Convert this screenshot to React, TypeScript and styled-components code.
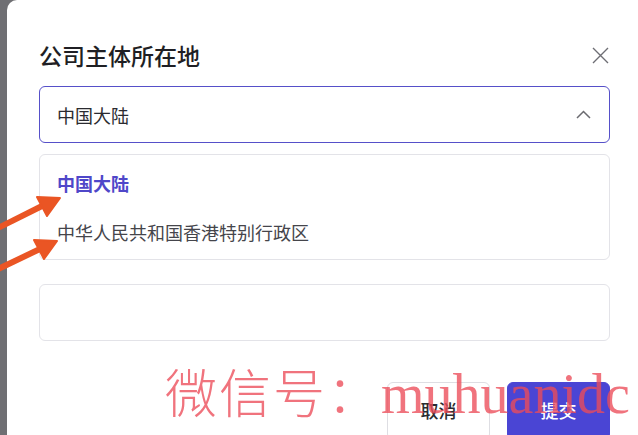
import styled, { createGlobalStyle } from 'styled-components';

const GlobalStyle = createGlobalStyle`
  html, body {
    margin: 0;
    padding: 0;
    height: 100%;
    overflow: hidden;
  }
  body {
    font-family: "Noto Sans CJK SC", "Noto Sans", sans-serif;
    background: #6f6f73;
  }
`;

const Page = styled.div`
  position: relative;
  display: flex;
  height: 435px;
  overflow: hidden;
`;

const Modal = styled.div`
  flex: 1;
  margin-left: 7px;
  background: #ffffff;
  border-top-left-radius: 10px;
  padding: 38px 28px 0 32px;
  display: flex;
  flex-direction: column;
  & > * {
    flex-shrink: 0;
  }
`;

const Header = styled.div`
  display: flex;
  align-items: center;
  justify-content: space-between;
  height: 34px;
`;

const Title = styled.h2`
  margin: 0;
  font-size: 23px;
  font-weight: 500;
  color: #1f1f24;
  letter-spacing: 0;
`;

const CloseButton = styled.button`
  border: none;
  background: none;
  padding: 0;
  width: 18px;
  height: 18px;
  margin-right: 1px;
  display: flex;
  align-items: center;
  justify-content: center;
  color: #6e6e74;
`;

const Field = styled.div<{ $focused?: boolean }>`
  height: 57px;
  box-sizing: border-box;
  border: 1px solid ${p => (p.$focused ? '#5650c9' : '#e3e3e8')};
  border-radius: 6px;
  display: flex;
  align-items: center;
  justify-content: space-between;
  padding: 0 18px 0 17px;
  font-size: 18px;
  color: #2b2b30;
`;

const SelectField = styled(Field)`
  margin-top: 14px;
`;

const InputField = styled(Field)`
  margin-top: 24px;
`;

const Dropdown = styled.ul`
  list-style: none;
  margin: 11px 0 0;
  padding: 3px 0;
  border: 1px solid #e3e3e8;
  border-radius: 6px;
`;

const Option = styled.li<{ $selected?: boolean }>`
  height: 49px;
  display: flex;
  align-items: center;
  padding: 0 17px;
  font-size: 18px;
  font-weight: ${p => (p.$selected ? 700 : 400)};
  color: ${p => (p.$selected ? '#4f47c9' : '#45454b')};
`;

const Footer = styled.div`
  margin-top: 41px;
  display: flex;
  justify-content: flex-end;
  gap: 17px;
`;

const Button = styled.button<{ $primary?: boolean }>`
  width: 103px;
  height: 58px;
  border-radius: 6px;
  box-sizing: border-box;
  border: 1px solid ${p => (p.$primary ? '#4a45d4' : '#dedee3')};
  background: ${p => (p.$primary ? '#4a45d4' : '#ffffff')};
  color: ${p => (p.$primary ? '#ffffff' : '#2b2b30')};
  font-family: inherit;
  font-size: 18px;
  font-weight: 500;
  padding: 0 0 2px;
`;

const Arrows = styled.svg`
  position: absolute;
  left: 0;
  top: 187px;
  pointer-events: none;
`;

const Watermark = styled.div`
  position: absolute;
  left: 165px;
  top: 365px;
  font-family: "Liberation Serif", "Noto Sans CJK SC", serif;
  font-size: 56px;
  line-height: 1;
  color: rgba(236, 76, 88, 0.78);
  white-space: nowrap;
  pointer-events: none;
`;

const WatermarkCjk = styled.span`
  font-family: "Noto Sans CJK SC", serif;
  font-size: 52px;
  font-weight: 300;
  letter-spacing: 2px;
`;

export default function App() {
  return (
    <>
      <GlobalStyle />
      <Page>
        <Modal>
          <Header>
            <Title>公司主体所在地</Title>
            <CloseButton aria-label="关闭">
              <svg width="17" height="17" viewBox="0 0 17 17" fill="none" stroke="currentColor" strokeWidth="1.4">
                <path d="M1 1L16 16M16 1L1 16" />
              </svg>
            </CloseButton>
          </Header>
          <SelectField $focused>
            <span>中国大陆</span>
            <svg width="15" height="9" viewBox="0 0 15 9" fill="none" stroke="#6b6b70" strokeWidth="1.5">
              <path d="M1 8L7.5 1.5L14 8" />
            </svg>
          </SelectField>
          <Dropdown>
            <Option $selected>中国大陆</Option>
            <Option>中华人民共和国香港特别行政区</Option>
          </Dropdown>
          <InputField />
          <Footer>
            <Button>取消</Button>
            <Button $primary>提交</Button>
          </Footer>
        </Modal>
        <Arrows width="70" height="90" viewBox="0 0 70 90">
          <g fill="#ea5524" stroke="#ea5524" strokeWidth="6" strokeLinecap="round">
            <line x1="-4" y1="42" x2="44" y2="18" />
            <path d="M60 11L37 10L47 29Z" strokeWidth="2" strokeLinejoin="round" />
            <line x1="-4" y1="83" x2="42" y2="61" />
            <path d="M57 54L34 53L44 72Z" strokeWidth="2" strokeLinejoin="round" />
          </g>
        </Arrows>
        <Watermark>
          <WatermarkCjk>微信号：</WatermarkCjk>muhuanidc
        </Watermark>
      </Page>
    </>
  );
}
